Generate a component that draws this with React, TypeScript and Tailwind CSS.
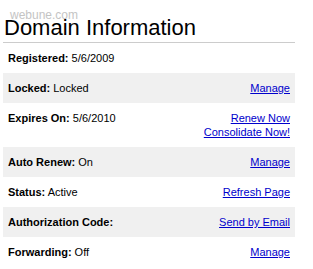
const rows: { label: string; value?: string; links: string[]; shaded: boolean }[] = [
  { label: 'Registered:', value: '5/6/2009', links: [], shaded: false },
  { label: 'Locked:', value: 'Locked', links: ['Manage'], shaded: true },
  { label: 'Expires On:', value: '5/6/2010', links: ['Renew Now', 'Consolidate Now!'], shaded: false },
  { label: 'Auto Renew:', value: 'On', links: ['Manage'], shaded: true },
  { label: 'Status:', value: 'Active', links: ['Refresh Page'], shaded: false },
  { label: 'Authorization Code:', links: ['Send by Email'], shaded: true },
  { label: 'Forwarding:', value: 'Off', links: ['Manage'], shaded: false },
]

export default function App() {
  return (
    <div className="relative h-[269px] w-[313px] bg-white pl-[3px] pt-[16px] font-['Liberation_Sans',Arial,sans-serif] text-black">
      <span className="absolute left-[10px] top-[8px] text-[12px] leading-[14px] text-[#c4c4c4]">webune.com</span>
      <h1 className="relative ml-[1px] text-[22px] leading-[24px]">Domain Information</h1>
      <div className="mt-[2px] w-[292px] border-t border-[#cccccc]">
        {rows.map((r) => (
          <div
            key={r.label}
            className={`flex justify-between px-[5px] py-[8px] text-[11px] leading-[14px] ${r.shaded ? 'bg-[#f0f0f0]' : ''}`}
          >
            <div>
              <b>{r.label}</b>
              {r.value ? ` ${r.value}` : ''}
            </div>
            <div className="flex flex-col items-end">
              {r.links.map((l) => (
                <a key={l} href="#" className="text-[#0000cc] underline">
                  {l}
                </a>
              ))}
            </div>
          </div>
        ))}
      </div>
    </div>
  )
}
